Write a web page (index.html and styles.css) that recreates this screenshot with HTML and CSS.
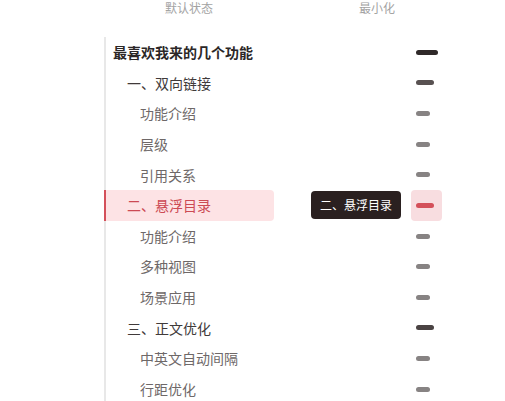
FILE: index.html
```html
<!DOCTYPE html>
<html lang="zh">
<head>
<meta charset="utf-8">
<link rel="stylesheet" href="styles.css">
</head>
<body>
<div class="page">
  <div class="heads">
    <span class="head head-default">默认状态</span>
    <span class="head head-min">最小化</span>
  </div>
  <div class="main">
    <nav class="toc">
      <div class="item l0">最喜欢我来的几个功能</div>
      <div class="item l1">一、双向链接</div>
      <div class="item l2">功能介绍</div>
      <div class="item l2">层级</div>
      <div class="item l2">引用关系</div>
      <div class="item l1 active">二、悬浮目录</div>
      <div class="item l2">功能介绍</div>
      <div class="item l2">多种视图</div>
      <div class="item l2">场景应用</div>
      <div class="item l1">三、正文优化</div>
      <div class="item l2">中英文自动间隔</div>
      <div class="item l2">行距优化</div>
    </nav>
    <div class="mini">
      <div class="mrow"><span class="bar b0"></span></div>
      <div class="mrow"><span class="bar b1"></span></div>
      <div class="mrow"><span class="bar b2"></span></div>
      <div class="mrow"><span class="bar b2"></span></div>
      <div class="mrow"><span class="bar b2"></span></div>
      <div class="mrow active"><span class="bar b1"></span><span class="tip">二、悬浮目录</span></div>
      <div class="mrow"><span class="bar b2"></span></div>
      <div class="mrow"><span class="bar b2"></span></div>
      <div class="mrow"><span class="bar b2"></span></div>
      <div class="mrow"><span class="bar b1 dark"></span></div>
      <div class="mrow"><span class="bar b2"></span></div>
      <div class="mrow"><span class="bar b2"></span></div>
    </div>
  </div>
</div>
</body>
</html>
```
FILE: styles.css
```css
html, body {
  margin: 0;
  padding: 0;
  background: #ffffff;
  overflow: hidden;
  height: 401px;
}
body {
  font-family: "Noto Sans CJK SC", "Noto Sans", sans-serif;
}
.page {
  width: 505px;
}
.heads {
  display: flex;
  height: 16px;
  font-size: 12px;
  line-height: 16px;
  color: #a3a3a3;
}
.head-default {
  margin-left: 165px;
}
.head-min {
  margin-left: 146px;
}
.main {
  display: flex;
  margin-top: 21px;
  padding-left: 104px;
}
.toc {
  width: 168px;
  border-left: 2px solid #e8e8e8;
}
.item {
  height: 30.64px;
  line-height: 30.64px;
  font-size: 14px;
  margin-left: -2px;
  border-left: 2px solid transparent;
  white-space: nowrap;
  border-radius: 0 4px 4px 0;
}
.l0 {
  padding-left: 7px;
  font-weight: 700;
  color: #2b2727;
}
.l1 {
  padding-left: 21px;
  font-weight: 400;
  color: #403a3a;
}
.l2 {
  padding-left: 34px;
  color: #6e6868;
}
.item.active {
  background: #fde3e5;
  border-left-color: #d4505a;
  color: #cc4a54;
}
.mini {
  margin-left: 137px;
  width: 31px;
}
.mrow {
  position: relative;
  height: 30.64px;
  display: flex;
  align-items: center;
  padding-left: 5px;
  border-radius: 4px;
}
.bar {
  display: block;
  height: 5px;
  border-radius: 3px;
  background: #858080;
}
.b0 {
  width: 22px;
  background: #2f2929;
}
.b1 {
  width: 18px;
  background: #585151;
}
.b1.dark {
  background: #4a4343;
}
.b2 {
  width: 14px;
  background: #878383;
}
.mrow.active {
  background: #f8dde0;
}
.mrow.active .bar {
  background: #d4505a;
}
.tip {
  position: absolute;
  right: 41px;
  top: 1px;
  height: 28px;
  line-height: 28px;
  padding: 0 9px;
  font-size: 12px;
  color: #ffffff;
  background: #2a2020;
  border-radius: 4px;
  white-space: nowrap;
}
```
